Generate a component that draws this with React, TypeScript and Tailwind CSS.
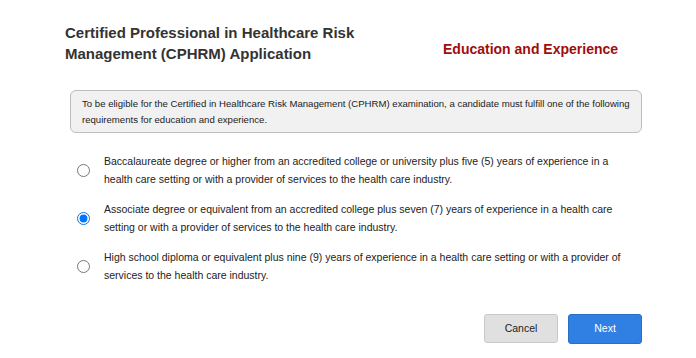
import { useState } from 'react'

const options = [
  'Baccalaureate degree or higher from an accredited college or university plus five (5) years of experience in a health care setting or with a provider of services to the health care industry.',
  'Associate degree or equivalent from an accredited college plus seven (7) years of experience in a health care setting or with a provider of services to the health care industry.',
  'High school diploma or equivalent plus nine (9) years of experience in a health care setting or with a provider of services to the health care industry.',
]

export default function App() {
  const [selected, setSelected] = useState(1)

  return (
    <div className="w-[696px] h-[358px] bg-white font-['Liberation_Sans',Arial,sans-serif] text-[#222]">
      <div className="flex items-start pl-[65px] pt-[22px]">
        <h1 className="w-[310px] text-[15px] leading-[21px] font-bold text-[#333]">
          Certified Professional in Healthcare Risk Management (CPHRM) Application
        </h1>
        <h2 className="ml-[68px] mt-[18px] text-[14px] leading-[18px] font-bold text-[#a00d0d]">
          Education and Experience
        </h2>
      </div>

      <div className="ml-[70px] mt-[26px] w-[572px] h-[43px] rounded-[6px] border border-[#bdbdbd] bg-[#f1f1f1] px-[11px] pt-[5px] text-[9.6px] leading-[16px] text-[#222]">
        To be eligible for the Certified in Healthcare Risk Management (CPHRM) examination, a candidate must fulfill one of the following requirements for education and experience.
      </div>

      <div className="ml-[77px] mt-[19px] flex flex-col gap-[12px]">
        {options.map((text, i) => (
          <label key={i} className="flex items-center cursor-pointer">
            <input
              type="radio"
              name="edu"
              checked={selected === i}
              onChange={() => setSelected(i)}
              className="w-[13px] h-[13px] m-0 accent-[#0075ff]"
            />
            <span className="ml-[14px] w-[525px] text-[10.5px] leading-[18px] text-[#222]">{text}</span>
          </label>
        ))}
      </div>

      <div className="flex justify-end gap-[10px] pr-[54px] mt-[30px]">
        <button className="w-[74px] h-[29px] rounded-[3px] border border-[#c8c8c8] bg-[#e0e0e0] text-[10.5px] text-[#222]">
          Cancel
        </button>
        <button className="w-[74px] h-[30px] rounded-[3px] border border-[#2a6fc4] bg-[#2f80e2] text-[10.5px] text-white">
          Next
        </button>
      </div>
    </div>
  )
}
